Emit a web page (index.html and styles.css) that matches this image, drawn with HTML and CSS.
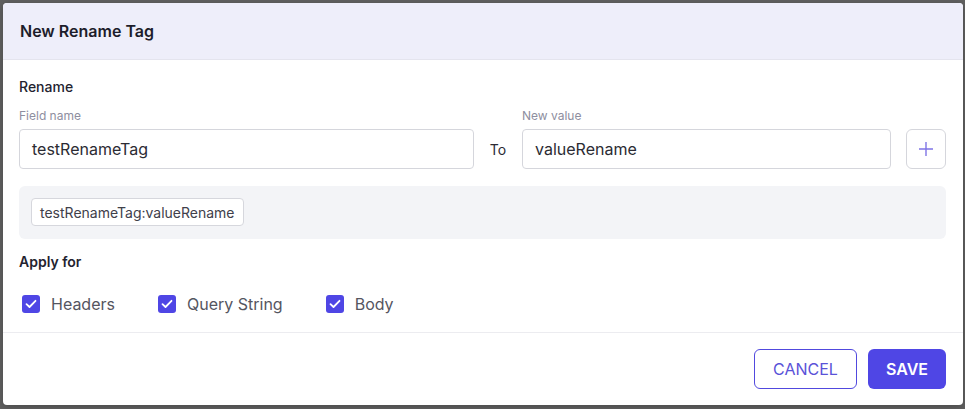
FILE: index.html
```html
<!DOCTYPE html>
<html lang="en">
<head>
<meta charset="utf-8">
<title>New Rename Tag</title>
<link rel="stylesheet" href="styles.css">
</head>
<body>
<div class="dialog">
  <div class="dialog-header">New Rename Tag</div>
  <div class="dialog-body">
    <div class="section-title">Rename</div>
    <div class="rename-grid">
      <div class="field-label">Field name</div>
      <div></div>
      <div class="field-label">New value</div>
      <div></div>
      <div class="input">testRenameTag</div>
      <div class="to">To</div>
      <div class="input">valueRename</div>
      <button class="add-btn" type="button" aria-label="Add">
        <svg width="16" height="16" viewBox="0 0 16 16"><path d="M8 1v14M1 8h14" stroke="#7f74e6" stroke-width="1.4" fill="none"/></svg>
      </button>
    </div>
    <div class="tags-box">
      <span class="chip">testRenameTag:valueRename</span>
    </div>
    <div class="section-title apply">Apply for</div>
    <div class="checks">
      <label class="check"><span class="box"><svg width="12" height="10" viewBox="0 0 12 10"><path d="M1.5 5.2l3 2.8 6-6.2" stroke="#fff" stroke-width="1.8" fill="none" stroke-linecap="round" stroke-linejoin="round"/></svg></span>Headers</label>
      <label class="check"><span class="box"><svg width="12" height="10" viewBox="0 0 12 10"><path d="M1.5 5.2l3 2.8 6-6.2" stroke="#fff" stroke-width="1.8" fill="none" stroke-linecap="round" stroke-linejoin="round"/></svg></span>Query String</label>
      <label class="check"><span class="box"><svg width="12" height="10" viewBox="0 0 12 10"><path d="M1.5 5.2l3 2.8 6-6.2" stroke="#fff" stroke-width="1.8" fill="none" stroke-linecap="round" stroke-linejoin="round"/></svg></span>Body</label>
    </div>
  </div>
  <div class="dialog-footer">
    <button class="btn btn-outline" type="button">CANCEL</button>
    <button class="btn btn-primary" type="button">SAVE</button>
  </div>
</div>
</body>
</html>
```

FILE: styles.css
```css
* { box-sizing: border-box; }
html, body { margin: 0; padding: 0; }
body {
  background: #616161;
  font-family: Inter, "Noto Sans", sans-serif;
  width: 965px;
  height: 409px;
  overflow: hidden;
  padding: 3px 2px 0 3px;
}
.dialog {
  width: 960px;
  height: 402px;
  background: #fff;
  border-radius: 4px;
  overflow: hidden;
  display: flex;
  flex-direction: column;
  box-shadow: 0 2px 8px rgba(0,0,0,0.25);
}
.dialog-header {
  height: 57px;
  flex: none;
  background: #eeeefa;
  border-bottom: 1px solid #e4e4ee;
  padding: 0 17px;
  display: flex;
  align-items: center;
  font-size: 16px;
  font-weight: 600;
  color: #1d1d2b;
}
.dialog-body {
  padding: 18px 17px 16px 16px;
  border-bottom: 1px solid #ececf0;
}
.section-title {
  font-size: 14px;
  line-height: 18px;
  font-weight: 500;
  color: #23232f;
}
.section-title.apply {
  font-weight: 600;
  margin-top: 14px;
}
.rename-grid {
  display: grid;
  grid-template-columns: 455px 48px 369px 1fr;
  margin-top: 12px;
}
.field-label {
  font-size: 12px;
  line-height: 16px;
  color: #8e8ea0;
  margin-bottom: 5px;
}
.input {
  height: 40px;
  border: 1px solid #d5d6dc;
  border-radius: 4px;
  padding: 0 12px;
  display: flex;
  align-items: center;
  font-size: 16px;
  color: #2b2b33;
}
.to {
  display: flex;
  align-items: center;
  justify-content: center;
  font-size: 14px;
  color: #2b2b33;
}
.add-btn {
  justify-self: end;
  width: 40px;
  height: 40px;
  border: 1px solid #d5d6dc;
  border-radius: 6px;
  background: #fff;
  padding: 0;
  display: flex;
  align-items: center;
  justify-content: center;
}
.tags-box {
  margin-top: 17px;
  background: #f3f4f7;
  border-radius: 6px;
  padding: 12px 12px 13px 12px;
  display: flex;
}
.chip {
  height: 28px;
  display: inline-flex;
  align-items: center;
  padding: 0 8px;
  background: #fff;
  border: 1px solid #d6d7dd;
  border-radius: 4px;
  font-size: 14px;
  color: #40404a;
}
.checks {
  margin-top: 21px;
  display: flex;
  gap: 40px;
  height: 24px;
  align-items: center;
}
.check {
  display: flex;
  align-items: center;
  font-size: 16px;
  color: #55555f;
}
.box {
  width: 18px;
  height: 18px;
  margin-left: 3px;
  margin-right: 11px;
  background: #4f46e5;
  border-radius: 3px;
  display: flex;
  align-items: center;
  justify-content: center;
}
.dialog-footer {
  padding: 16px 17px 0 0;
  display: flex;
  justify-content: flex-end;
  gap: 11px;
}
.btn {
  height: 40px;
  border-radius: 6px;
  font-family: Inter, "Noto Sans", sans-serif;
  font-size: 16px;
  cursor: pointer;
}
.btn-outline {
  width: 103px;
  background: #fff;
  border: 1px solid #5149de;
  color: #5a52d8;
}
.btn-primary {
  width: 78px;
  background: #4f46e5;
  border: none;
  color: #fff;
  font-weight: 600;
}
```
